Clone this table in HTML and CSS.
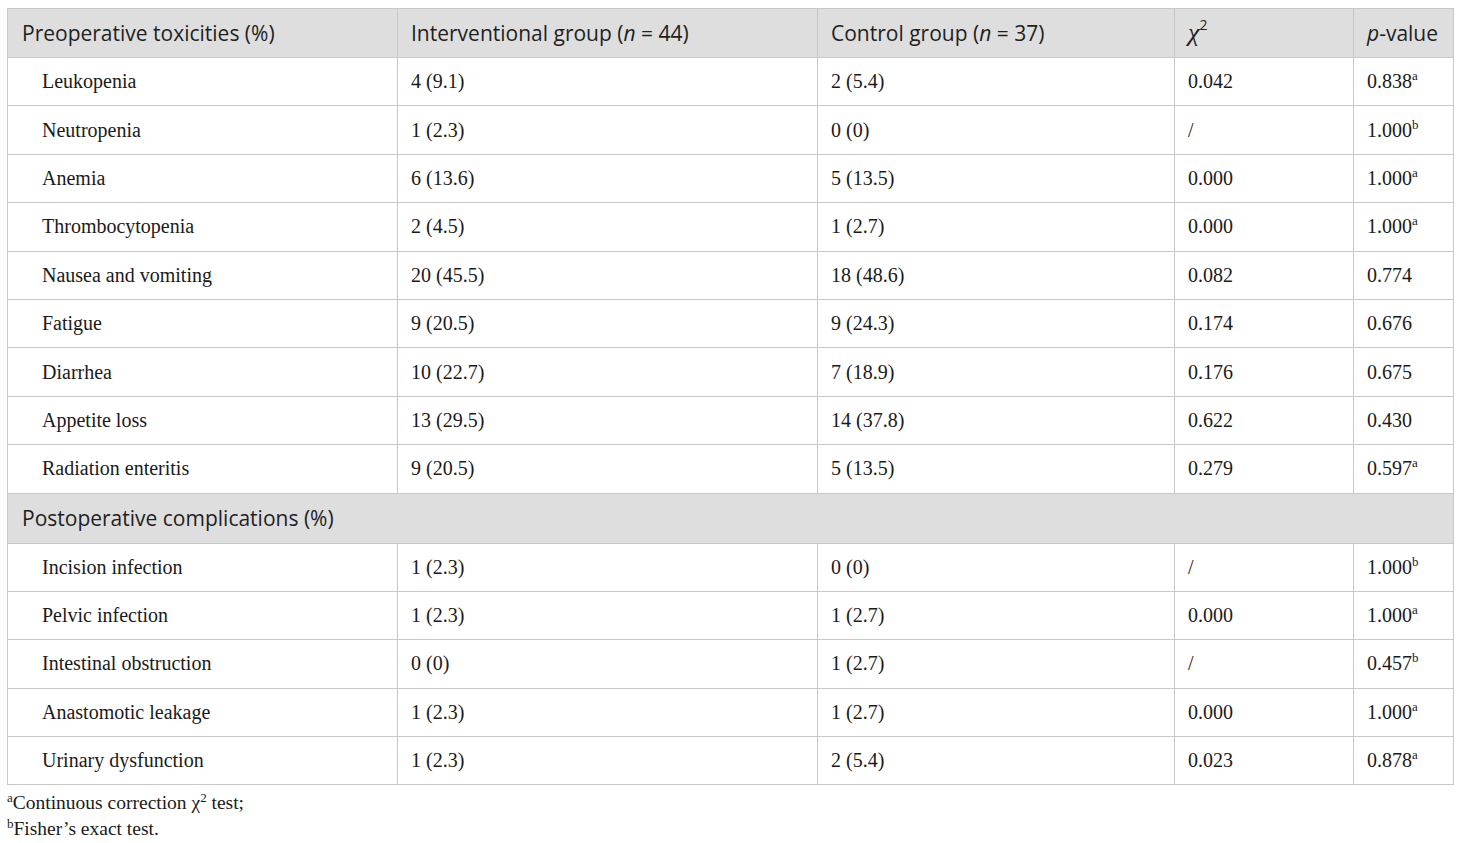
FILE: index.html
```html
<!DOCTYPE html>
<html>
<head>
<meta charset="utf-8">
<link rel="stylesheet" href="styles.css">
</head>
<body>
<div class="wrap">
<table class="tbl">
  <colgroup>
    <col class="c1"><col class="c2"><col class="c3"><col class="c4"><col class="c5">
  </colgroup>
  <thead>
    <tr class="head">
      <th>Preoperative toxicities (%)</th>
      <th>Interventional group (<i>n</i> = 44)</th>
      <th>Control group (<i>n</i> = 37)</th>
      <th><i class="chi">χ</i><sup>2</sup></th>
      <th><i>p</i>-value</th>
    </tr>
  </thead>
  <tbody>
    <tr><td class="name">Leukopenia</td><td>4 (9.1)</td><td>2 (5.4)</td><td>0.042</td><td>0.838<sup>a</sup></td></tr>
    <tr><td class="name">Neutropenia</td><td>1 (2.3)</td><td>0 (0)</td><td>/</td><td>1.000<sup>b</sup></td></tr>
    <tr><td class="name">Anemia</td><td>6 (13.6)</td><td>5 (13.5)</td><td>0.000</td><td>1.000<sup>a</sup></td></tr>
    <tr><td class="name">Thrombocytopenia</td><td>2 (4.5)</td><td>1 (2.7)</td><td>0.000</td><td>1.000<sup>a</sup></td></tr>
    <tr><td class="name">Nausea and vomiting</td><td>20 (45.5)</td><td>18 (48.6)</td><td>0.082</td><td>0.774</td></tr>
    <tr><td class="name">Fatigue</td><td>9 (20.5)</td><td>9 (24.3)</td><td>0.174</td><td>0.676</td></tr>
    <tr><td class="name">Diarrhea</td><td>10 (22.7)</td><td>7 (18.9)</td><td>0.176</td><td>0.675</td></tr>
    <tr><td class="name">Appetite loss</td><td>13 (29.5)</td><td>14 (37.8)</td><td>0.622</td><td>0.430</td></tr>
    <tr><td class="name">Radiation enteritis</td><td>9 (20.5)</td><td>5 (13.5)</td><td>0.279</td><td>0.597<sup>a</sup></td></tr>
    <tr class="section"><td colspan="5">Postoperative complications (%)</td></tr>
    <tr><td class="name">Incision infection</td><td>1 (2.3)</td><td>0 (0)</td><td>/</td><td>1.000<sup>b</sup></td></tr>
    <tr><td class="name">Pelvic infection</td><td>1 (2.3)</td><td>1 (2.7)</td><td>0.000</td><td>1.000<sup>a</sup></td></tr>
    <tr><td class="name">Intestinal obstruction</td><td>0 (0)</td><td>1 (2.7)</td><td>/</td><td>0.457<sup>b</sup></td></tr>
    <tr><td class="name">Anastomotic leakage</td><td>1 (2.3)</td><td>1 (2.7)</td><td>0.000</td><td>1.000<sup>a</sup></td></tr>
    <tr><td class="name">Urinary dysfunction</td><td>1 (2.3)</td><td>2 (5.4)</td><td>0.023</td><td>0.878<sup>a</sup></td></tr>
  </tbody>
</table>
<div class="notes">
  <p><sup>a</sup>Continuous correction χ<sup>2</sup> test;</p>
  <p><sup>b</sup>Fisher’s exact test.</p>
</div>
</div>
</body>
</html>
```
FILE: styles.css
```css
html, body {
  margin: 0;
  padding: 0;
  background: #ffffff;
}
.wrap {
  padding: 8px 7px 0 7px;
  width: 1446px;
}
.tbl {
  width: 1446px;
  border-collapse: collapse;
  table-layout: fixed;
  font-family: "Liberation Serif", "Times New Roman", serif;
  font-size: 20px;
  color: #1a1a1a;
}
.c1 { width: 390px; }
.c2 { width: 420px; }
.c3 { width: 357px; }
.c4 { width: 179px; }
.c5 { width: 100px; }
.tbl th, .tbl td {
  border: 1px solid #c8c8c8;
  height: 48.4px;
  padding: 0 0 0 13px;
  text-align: left;
  vertical-align: middle;
  box-sizing: border-box;
}
.tbl th {
  background: #dedede;
  font-family: "Open Sans", "Noto Sans", sans-serif;
  font-weight: normal;
  font-size: 21px;
  color: #1f1f1f;
  height: 49px;
}
.tbl th:first-child { padding-left: 14px; }
.tbl td.name { padding-left: 34px; }
.chi {
  font-family: "Liberation Serif", serif;
  font-size: 26px;
}
.tbl sup {
  font-size: 13px;
  vertical-align: 8px;
  line-height: 0;
}
.tbl th sup { font-size: 14px; vertical-align: 11px; }
.section td {
  background: #dedede;
  font-family: "Open Sans", "Noto Sans", sans-serif;
  font-size: 21px;
  color: #1f1f1f;
  padding-left: 14px;
  height: 50px;
}
.notes {
  font-family: "Liberation Serif", "Times New Roman", serif;
  font-size: 19.5px;
  color: #1a1a1a;
  padding-top: 5px;
}
.notes p {
  margin: 0;
  line-height: 26px;
}
.notes sup {
  font-size: 13px;
  vertical-align: 7px;
  line-height: 0;
}
```
